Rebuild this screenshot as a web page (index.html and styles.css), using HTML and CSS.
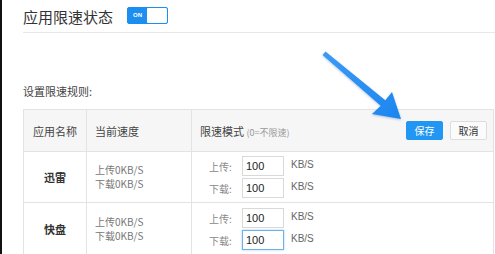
FILE: index.html
```html
<!DOCTYPE html>
<html lang="zh">
<head>
<meta charset="utf-8">
<link rel="stylesheet" href="styles.css">
</head>
<body>
<div class="page">
  <div class="status">
    <span class="title">应用限速状态</span>
    <span class="toggle"><span class="on">ON</span><span class="knob"></span></span>
  </div>
  <div class="rules-label">设置限速规则:</div>
  <table class="rules">
    <colgroup><col class="c1"><col class="c2"><col class="c3"></colgroup>
    <thead>
      <tr>
        <th class="name">应用名称</th>
        <th>当前速度</th>
        <th>
          <div class="mode-head">
            <span>限速模式 <span class="hint">(0=不限速)</span></span>
            <span class="btns"><button class="btn primary">保存</button><button class="btn">取消</button></span>
          </div>
        </th>
      </tr>
    </thead>
    <tbody>
      <tr>
        <td class="name">迅雷</td>
        <td class="speed"><div>上传0KB/S</div><div>下载0KB/S</div></td>
        <td>
          <div class="limits">
            <div class="limit"><span class="lbl">上传:</span><input class="inp" value="100"><span class="unit">KB/S</span></div>
            <div class="limit"><span class="lbl">下载:</span><input class="inp" value="100"><span class="unit">KB/S</span></div>
          </div>
        </td>
      </tr>
      <tr>
        <td class="name">快盘</td>
        <td class="speed"><div>上传0KB/S</div><div>下载0KB/S</div></td>
        <td>
          <div class="limits">
            <div class="limit"><span class="lbl">上传:</span><input class="inp" value="100"><span class="unit">KB/S</span></div>
            <div class="limit"><span class="lbl">下载:</span><input class="inp focus" value="100"><span class="unit">KB/S</span></div>
          </div>
        </td>
      </tr>
    </tbody>
  </table>
  <svg class="arrow" width="100" height="80" viewBox="0 0 100 80">
    <defs>
      <linearGradient id="g" x1="0" y1="0" x2="1" y2="1">
        <stop offset="0" stop-color="#3d9af5"/>
        <stop offset="1" stop-color="#1b86ef"/>
      </linearGradient>
      <filter id="s" x="-20%" y="-20%" width="140%" height="140%">
        <feDropShadow dx="0" dy="1" stdDeviation="1" flood-color="#0a4a9a" flood-opacity="0.3"/>
      </filter>
    </defs>
    <polygon filter="url(#s)" fill="url(#g)" points="13.5,1.5 73.3,50.2 80,42 89,69 60,64 68.7,55.8 10.5,5"/>
  </svg>
</div>
</body>
</html>
```
FILE: styles.css
```css
html, body {
  margin: 0;
  padding: 0;
  background: #fff;
}
body {
  font-family: "Noto Sans CJK SC", "Liberation Sans", sans-serif;
  color: #444;
  width: 495px;
  height: 254px;
  overflow: hidden;
}
.page {
  position: relative;
  border-left: 2px solid #111;
  padding-left: 21px;
  height: 254px;
  box-sizing: border-box;
}
.status {
  display: flex;
  align-items: center;
  height: 32px;
  border-bottom: 1px solid #e8e8e8;
  gap: 14px;
}
.title {
  font-size: 15px;
  color: #333;
  line-height: 1;
  margin-top: 1px;
}
.toggle {
  display: flex;
  width: 41px;
  height: 17px;
  box-sizing: border-box;
  border: 1px solid #1b8ef0;
  border-radius: 2px;
  background: #1b8ef0;
  overflow: hidden;
  margin-top: -1px;
}
.on {
  width: 19px;
  color: #fff;
  font-family: "Liberation Sans", sans-serif;
  font-weight: bold;
  font-size: 6px;
  line-height: 15px;
  text-align: center;
}
.knob {
  flex: 1;
  background: #fff;
  border-radius: 1px;
}
.rules-label {
  font-size: 11px;
  color: #444;
  margin-top: 51px;
  line-height: 14px;
}
.rules {
  margin-top: 11px;
  border-collapse: collapse;
  width: 471px;
  table-layout: fixed;
  font-size: 11px;
}
.c1 { width: 63px; }
.c2 { width: 105px; }
.rules th, .rules td {
  border: 1px solid #e3e3e3;
  text-align: left;
  padding: 0 0 0 8px;
}
.rules thead th {
  background: #f6f6f6;
  height: 41px;
  font-weight: normal;
  color: #444;
}
.rules .name {
  text-align: center;
  padding: 0;
}
.rules tbody td.name {
  font-weight: bold;
  color: #333;
  font-size: 11px;
}
.rules tbody tr:first-child td {
  height: 50px;
}
.rules tbody tr:last-child td {
  height: 52px;
}
.mode-head {
  display: flex;
  align-items: center;
  justify-content: space-between;
  padding-right: 6px;
}
.hint {
  font-size: 9px;
  color: #999;
}
.btns {
  display: flex;
  gap: 7px;
}
.btn {
  font-family: "Noto Sans CJK SC", sans-serif;
  font-size: 10px;
  height: 19px;
  width: 37px;
  padding: 0;
  border: 1px solid #ddd;
  background: #fbfbfb;
  color: #333;
  border-radius: 2px;
  line-height: 17px;
}
.btn.primary {
  background: #2196f3;
  border-color: #2196f3;
  color: #fff;
}
.speed {
  font-size: 10px;
  color: #777;
  line-height: 14px;
}
.limits {
  display: flex;
  flex-direction: column;
  gap: 2px;
  padding-left: 9px;
}
.limit {
  display: flex;
  align-items: center;
  height: 20px;
}
.lbl {
  font-size: 10px;
  color: #888;
  width: 33px;
}
.inp {
  width: 42px;
  height: 20px;
  box-sizing: border-box;
  border: 1px solid #d9d9d9;
  padding: 0 0 0 3px;
  font-family: "Liberation Sans", sans-serif;
  font-size: 11px;
  color: #222;
  outline: none;
}
.inp.focus {
  border-color: #6bb3ea;
  box-shadow: 0 0 2px #9ccaf0;
}
.unit {
  font-family: "Liberation Sans", sans-serif;
  font-size: 10px;
  color: #666;
  margin-left: 7px;
  margin-top: -4px;
}
.arrow {
  position: absolute;
  left: 310px;
  top: 50px;
}
```
